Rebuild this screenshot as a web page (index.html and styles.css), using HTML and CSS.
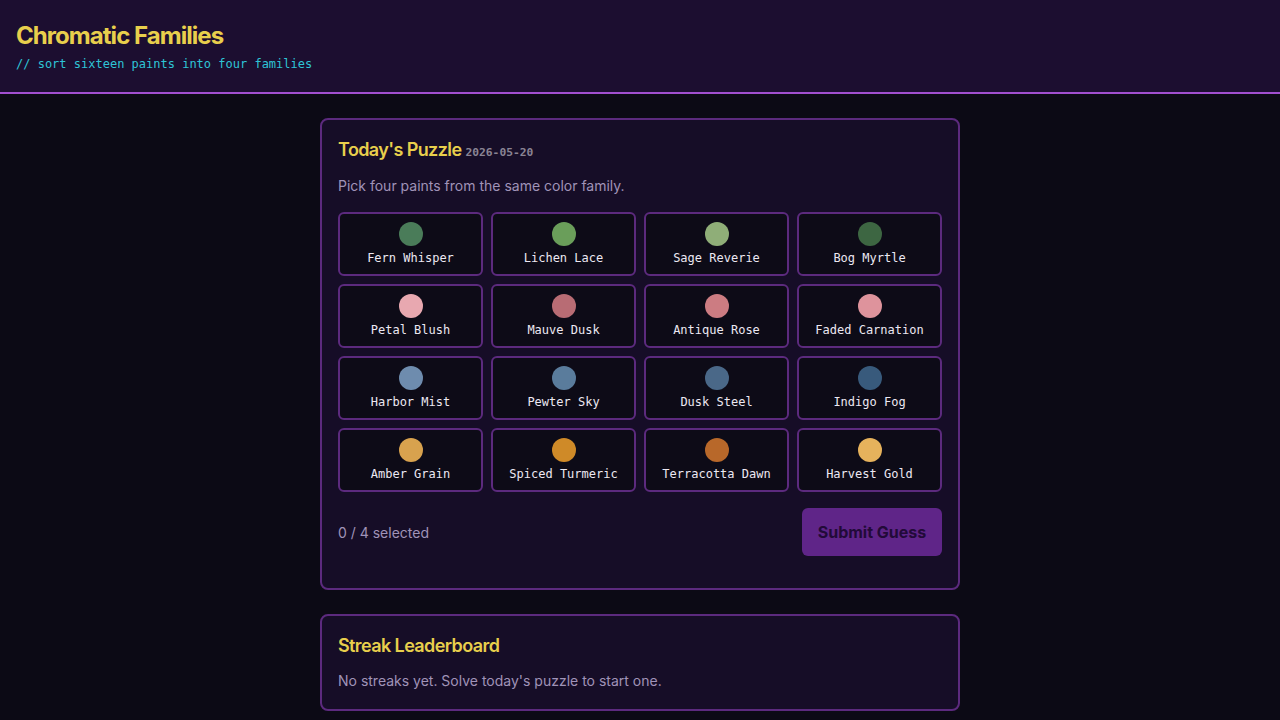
FILE: index.html
```html
<!DOCTYPE html>
<html lang="en">
<head>
<meta charset="utf-8">
<title>Chromatic Families</title>
<link rel="stylesheet" href="styles.css">
</head>
<body>
<header class="site-header">
  <h1 class="site-title">Chromatic Families</h1>
  <p class="site-sub">// sort sixteen paints into four families</p>
</header>
<main class="main">
  <section class="card">
    <h2 class="card-title">Today's Puzzle <span class="date">2026-05-20</span></h2>
    <p class="card-text">Pick four paints from the same color family.</p>
    <div class="grid">
      <button class="tile"><span class="swatch" style="background:#4a7c59"></span><span class="name">Fern Whisper</span></button>
      <button class="tile"><span class="swatch" style="background:#6a9e5a"></span><span class="name">Lichen Lace</span></button>
      <button class="tile"><span class="swatch" style="background:#8fae78"></span><span class="name">Sage Reverie</span></button>
      <button class="tile"><span class="swatch" style="background:#3d6642"></span><span class="name">Bog Myrtle</span></button>
      <button class="tile"><span class="swatch" style="background:#e8a8b0"></span><span class="name">Petal Blush</span></button>
      <button class="tile"><span class="swatch" style="background:#b86c74"></span><span class="name">Mauve Dusk</span></button>
      <button class="tile"><span class="swatch" style="background:#cc7c82"></span><span class="name">Antique Rose</span></button>
      <button class="tile"><span class="swatch" style="background:#de939c"></span><span class="name">Faded Carnation</span></button>
      <button class="tile"><span class="swatch" style="background:#6e8cae"></span><span class="name">Harbor Mist</span></button>
      <button class="tile"><span class="swatch" style="background:#5a7c9c"></span><span class="name">Pewter Sky</span></button>
      <button class="tile"><span class="swatch" style="background:#4a6888"></span><span class="name">Dusk Steel</span></button>
      <button class="tile"><span class="swatch" style="background:#385a7c"></span><span class="name">Indigo Fog</span></button>
      <button class="tile"><span class="swatch" style="background:#d8a24e"></span><span class="name">Amber Grain</span></button>
      <button class="tile"><span class="swatch" style="background:#cf8a28"></span><span class="name">Spiced Turmeric</span></button>
      <button class="tile"><span class="swatch" style="background:#b8682a"></span><span class="name">Terracotta Dawn</span></button>
      <button class="tile"><span class="swatch" style="background:#e6b25c"></span><span class="name">Harvest Gold</span></button>
    </div>
    <div class="footer-row">
      <span class="count">0 / 4 selected</span>
      <button class="submit">Submit Guess</button>
    </div>
  </section>
  <section class="card card-small">
    <h2 class="card-title">Streak Leaderboard</h2>
    <p class="card-text last">No streaks yet. Solve today's puzzle to start one.</p>
  </section>
</main>
</body>
</html>
```

FILE: styles.css
```css
* { box-sizing: border-box; }
html, body { margin: 0; padding: 0; }
body {
  background: #0c0a15;
  font-family: Inter, "Liberation Sans", sans-serif;
  color: #e6e0f0;
}
.site-header {
  background: #1c0e30;
  border-bottom: 2px solid #a24fd0;
  height: 94px;
  padding: 21px 16px 0;
}
.site-title {
  margin: 0;
  font-size: 24px;
  line-height: 30px;
  font-weight: 700;
  color: #e8cf4c;
  letter-spacing: -0.95px;
}
.site-sub {
  margin: 5px 0 0;
  font-family: "DejaVu Sans Mono", monospace;
  font-size: 12px;
  line-height: 16px;
  color: #2ec4d6;
}
.main {
  width: 640px;
  margin: 24px auto 0;
  display: flex;
  flex-direction: column;
  gap: 24px;
}
.card {
  background: #160d27;
  border: 2px solid #5c2a7e;
  border-radius: 8px;
  padding: 16px 16px 32px;
}
.card-small { padding-bottom: 18px; }
.card-title {
  margin: 0;
  font-size: 18px;
  line-height: 28px;
  height: 28px;
  font-weight: 600;
  color: #e8cf4c;
  letter-spacing: -0.6px;
}
.date {
  font-family: "DejaVu Sans Mono", monospace;
  font-size: 11.3px;
  line-height: 1;
  font-weight: 700;
  color: #8a8494;
  letter-spacing: 0;
}
.card-text {
  margin: 12px 0 16px;
  font-size: 14px;
  line-height: 20px;
  color: #a093b8;
}
.card-text.last { margin: 11px 0 0; }
.grid {
  display: grid;
  grid-template-columns: repeat(4, 1fr);
  gap: 8px;
}
.tile {
  height: 64px;
  background: #0d0b17;
  border: 2px solid #5c2a7e;
  border-radius: 6px;
  padding: 8px 0 0;
  display: flex;
  flex-direction: column;
  align-items: center;
  gap: 4px;
  cursor: pointer;
}
.swatch {
  width: 24px;
  height: 24px;
  border-radius: 50%;
  display: block;
}
.name {
  font-family: "DejaVu Sans Mono", monospace;
  font-size: 12px;
  line-height: 16px;
  color: #ece8f2;
}
.footer-row {
  margin-top: 16px;
  display: flex;
  justify-content: space-between;
  align-items: center;
}
.count {
  font-size: 14px;
  color: #a093b8;
}
.submit {
  width: 140px;
  height: 48px;
  background: #5f2588;
  border: none;
  border-radius: 6px;
  font-family: Inter, "Liberation Sans", sans-serif;
  font-size: 16px;
  font-weight: 700;
  color: #220a38;
}
```
